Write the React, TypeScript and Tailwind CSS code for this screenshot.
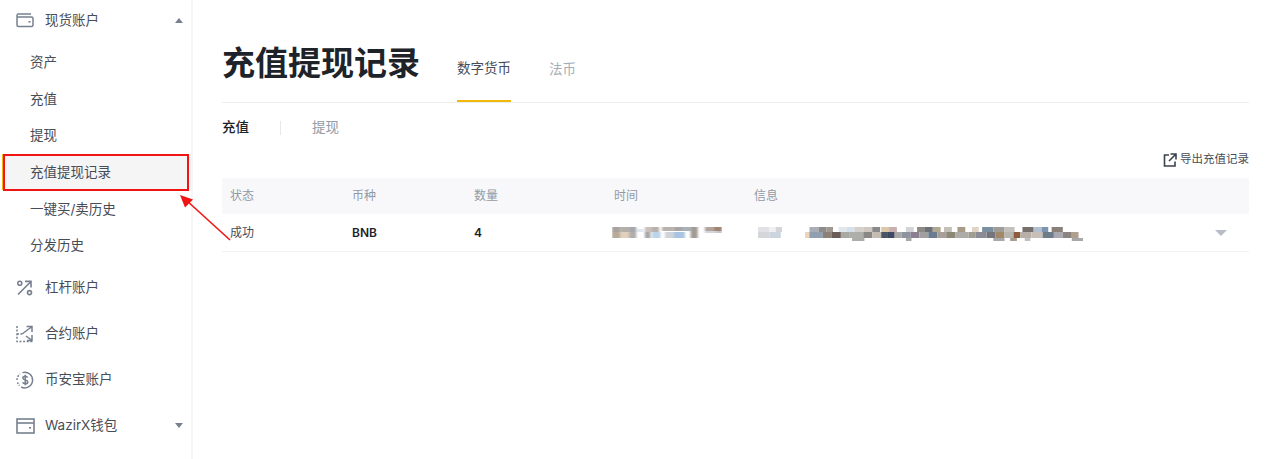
import type { ReactNode } from "react";

const font = { fontFamily: '"Inter", "Noto Sans CJK SC", sans-serif' };

// 打码区域的马赛克色块 [x, y, w, h, 色]
const mosaicTime: [number, number, number, number, string][] = [
  [0, 0, 6, 5, "#a9a29c"], [6, 0, 6, 5, "#b4aea8"], [12, 0, 5, 5, "#a4a7ab"], [17, 2, 5, 3, "#dfe8f0"],
  [0, 5, 6, 6, "#b8a998"], [6, 5, 6, 6, "#e0d0bc"], [12, 5, 5, 6, "#b0aeac"], [23, 0, 5, 5, "#c8c0bc"],
  [28, 0, 5, 5, "#b8b0ac"], [23, 5, 4, 6, "#a8a8a8"], [28, 5, 6, 6, "#bcd4ea"], [35, 0, 8, 4, "#b8b2ae"],
  [43, 0, 6, 4, "#a8a4a4"], [37, 5, 6, 6, "#d0d4d8"], [43, 5, 8, 6, "#a8c4e0"], [49, 0, 6, 4, "#a8b0b8"],
  [55, 0, 5, 11, "#a09c94"], [65, 0, 6, 4, "#b0a49c"], [71, 0, 6, 4, "#a08470"], [65, 4, 8, 2, "#d0d4d8"],
  [73, 4, 4, 2, "#c0c4c8"],
];

const mosaicInfo: [number, number, number, number, string][] = [
  [0, 0, 9, 5, "#e2e2e6"], [9, 0, 5, 5, "#f0f0f2"], [14, 0, 5, 5, "#d4d4d8"],
  [0, 5, 9, 6, "#d4d6da"], [9, 5, 9, 6, "#ccd4e0"],
];

const mosaicHash: [number, number, number, number, string][] = [
  [4, 0, 8, 5, "#a8aeb8"], [12, 0, 7, 5, "#8e8c8a"], [19, 0, 6, 5, "#a09890"], [30, 0, 7, 5, "#e0e8ee"],
  [37, 0, 7, 5, "#d4e0ea"], [44, 0, 8, 5, "#d4d0cc"], [52, 0, 8, 5, "#d0c8c0"], [60, 0, 7, 5, "#8a8a8a"],
  [68, 0, 7, 5, "#dcc8a8"], [75, 0, 7, 5, "#c8b0b0"], [90, 0, 7, 5, "#d4d4d8"], [100, 0, 7, 5, "#8c8884"],
  [107, 0, 7, 5, "#6e7078"], [114, 0, 7, 5, "#b0a890"], [124, 0, 7, 5, "#c4c0b8"], [136, 0, 7, 5, "#a89c88"],
  [149, 0, 6, 5, "#e0d4c4"], [158, 0, 10, 5, "#7a90a0"], [168, 0, 10, 5, "#a09c98"], [178, 0, 9, 5, "#c4c0bc"],
  [194, 0, 10, 5, "#76706c"], [204, 0, 7, 5, "#b4c0d0"], [211, 0, 6, 5, "#7c94b0"], [220, 0, 10, 5, "#8a8078"],
  [0, 5, 5, 6, "#ecd4b8"], [4, 5, 12, 6, "#90a0b0"], [16, 5, 8, 6, "#8c8078"], [24, 5, 8, 6, "#6c5c58"],
  [32, 5, 8, 6, "#a8a8a4"], [40, 5, 12, 6, "#aeaeaa"], [52, 5, 8, 6, "#8a8884"], [60, 5, 8, 6, "#c4bcb0"],
  [68, 5, 6, 6, "#4c5468"], [74, 5, 6, 6, "#404860"], [80, 5, 6, 6, "#a8a8a8"], [86, 5, 8, 6, "#8c94a0"],
  [94, 5, 8, 6, "#8c8090"], [102, 5, 8, 6, "#a0a0a0"], [110, 5, 8, 6, "#6c7c90"], [118, 5, 8, 6, "#a8a098"],
  [126, 5, 8, 6, "#8c8878"], [134, 5, 12, 6, "#acaca8"], [146, 5, 6, 6, "#a09c90"], [152, 5, 10, 6, "#8c8c94"],
  [162, 5, 8, 6, "#74747c"], [170, 5, 8, 6, "#a08868"], [178, 5, 8, 6, "#b8b4ae"], [186, 5, 6, 6, "#8c5c3c"],
  [192, 5, 10, 6, "#b8b0a8"], [202, 5, 10, 6, "#c8c0b8"], [212, 5, 10, 6, "#6c7c88"], [222, 5, 8, 6, "#a8a8b0"],
  [230, 5, 8, 6, "#8c8480"], [238, 5, 6, 6, "#b0a090"], [42, 11, 11, 3, "#acaca8"], [90, 11, 5, 3, "#a8a8a8"],
  [168, 11, 10, 3, "#a8a8ac"], [183, 11, 6, 3, "#a89c90"], [196, 11, 5, 3, "#c0c0c0"], [238, 11, 10, 3, "#a8a8a8"],
];

function Mosaic({ cells, w, h, vw }: { cells: typeof mosaicTime; w: number; h: number; vw: number }) {
  return (
    <svg width={w} height={h} viewBox={`0 0 ${vw} ${h}`} preserveAspectRatio="none" className="block">
      <filter id="m">
        <feGaussianBlur stdDeviation="0.6" />
      </filter>
      <g filter="url(#m)">
        {cells.map(([x, y, cw, ch, c], i) => (
          <rect key={i} x={x} y={y} width={cw} height={ch} fill={c} />
        ))}
      </g>
    </svg>
  );
}

const stroke = "#76808f";

const SpotIcon = (
  <svg width="18" height="16" viewBox="0 0 18 16" fill="none" stroke={stroke} strokeWidth="1.5">
    <path d="M1 5.5V3.5C1 2.5 1.8 2 2.5 2H15" />
    <rect x="1" y="5" width="16" height="9.5" rx="1.5" />
    <rect x="12.5" y="9" width="2" height="1.6" fill={stroke} stroke="none" />
  </svg>
);

const MarginIcon = (
  <svg width="18" height="16" viewBox="0 0 18 16" fill="none" stroke={stroke} strokeWidth="1.6">
    <circle cx="3.8" cy="3.2" r="2" />
    <circle cx="13.5" cy="12.6" r="2" />
    <path d="M2 14.5L14.5 2M9 1.4H15V7.4" />
  </svg>
);

const FuturesIcon = (
  <svg width="18" height="18" viewBox="0 0 18 18" fill="none" stroke={stroke} strokeWidth="1.5">
    <path d="M1 1V16.5H17" strokeDasharray="2 1.6" />
    <path d="M1 9H6" strokeDasharray="2 1.4" />
    <path d="M6 9L15.5 2M10.5 1.5H16V7M10 11L15.5 15M16 10V15.5H11" />
  </svg>
);

const EarnIcon = (
  <svg width="18" height="18" viewBox="0 0 18 18" fill="none" stroke={stroke} strokeWidth="1.5">
    <path d="M6.5 1.6A7.8 7.8 0 1 1 5.2 16" />
    <path d="M1 9A8 8 0 0 1 4 3" strokeDasharray="1.8 1.4" />
    <path d="M1.4 11.5L3.4 14.6" strokeDasharray="1.6 1.2" />
    <path d="M11.6 6.6C11.2 5.6 10.2 5.2 9.2 5.2C8 5.2 6.8 5.8 6.8 7C6.8 9.6 11.8 8.2 11.8 10.9C11.8 12.2 10.6 12.8 9.3 12.8C8.1 12.8 7 12.2 6.6 11.2M9.2 3.8V14.2" />
  </svg>
);

const WalletIcon = (
  <svg width="19" height="16" viewBox="0 0 19 16" fill="none" stroke={stroke} strokeWidth="1.6">
    <rect x="1" y="1" width="17" height="14" />
    <path d="M1 5H18" />
    <rect x="13" y="9" width="2" height="1.6" fill={stroke} stroke="none" />
  </svg>
);

function MainItem({ icon, label, caret }: { icon: ReactNode; label: string; caret?: "up" | "down" }) {
  return (
    <div className="flex h-[46px] items-center pl-[16px] pr-[7px] text-[13.5px] text-[#474d57]">
      <span className="flex w-[29px] shrink-0 items-center">{icon}</span>
      <span className="flex-1">{label}</span>
      {caret === "up" && <span className="mr-[1px] h-0 w-0 border-x-[4px] border-b-[5px] border-x-transparent border-b-[#76808f]" />}
      {caret === "down" && <span className="mr-[1px] h-0 w-0 border-x-[4px] border-t-[5px] border-x-transparent border-t-[#76808f]" />}
    </div>
  );
}

function SubItem({ label, active }: { label: string; active?: boolean }) {
  return (
    <div
      className={
        active
          ? "ml-[2px] flex h-[36.6px] items-center border-l-[1px] border-[#f0b90b] bg-[#f5f5f5] pl-[27px] text-[13.5px] text-[#474d57]"
          : "flex h-[36.6px] items-center pl-[30px] text-[13.5px] text-[#474d57]"
      }
    >
      {label}
    </div>
  );
}

export default function App() {
  return (
    <div className="relative flex h-[459px] w-[1280px] overflow-hidden bg-white" style={font}>
      {/* サイドバー */}
      <aside className="h-full w-[193px] shrink-0 border-r-2 border-[#f5f5f5]">
        <div className="mb-[1px] mt-[-3px]">
          <MainItem icon={SpotIcon} label="现货账户" caret="up" />
        </div>
        <div className="mb-[1px]">
          <SubItem label="资产" />
          <SubItem label="充值" />
          <SubItem label="提现" />
          <SubItem label="充值提现记录" active />
          <SubItem label="一键买/卖历史" />
          <SubItem label="分发历史" />
        </div>
        <MainItem icon={MarginIcon} label="杠杆账户" />
        <MainItem icon={FuturesIcon} label="合约账户" />
        <MainItem icon={EarnIcon} label="币安宝账户" />
        <MainItem icon={WalletIcon} label="WazirX钱包" caret="down" />
      </aside>

      {/* メイン */}
      <main className="ml-[29px] w-[1027px]">
        <div className="flex h-[103px] items-end border-b border-[#eeeeee] pb-0">
          <h1 className="mb-[17px] w-[235px] text-[33px] leading-[44px] font-bold text-[#1e2329]">充值提现记录</h1>
          <div className="flex h-[66px] w-[54px] items-center border-b-2 border-[#f0b90b] pt-[1px] text-[13.5px] whitespace-nowrap text-[#474d57]">
            数字货币
          </div>
          <div className="ml-[38px] flex h-[66px] items-center pt-[1px] text-[13.5px] text-[#a6adb8]">法币</div>
        </div>

        <div className="flex h-[47px] items-center pt-[2px] text-[13.5px]">
          <span className="font-medium text-[#1e2329]">充值</span>
          <span className="ml-[31px] h-[14px] w-px bg-[#e6e8ea]" />
          <span className="ml-[31px] text-[#929aa5]">提现</span>
        </div>

        <div className="flex h-[28px] items-center justify-end gap-[3px] pb-[8px] text-[11.5px] text-[#474d57]">
          <svg width="14" height="14" viewBox="0 0 14 14" fill="none" stroke="#3c424c" strokeWidth="1.6">
            <path d="M6 2H1.5V13H12V8.5M7.5 1H13V6.5M13 1L6 8" />
          </svg>
          <span>导出充值记录</span>
        </div>

        <div className="flex h-[36px] items-center bg-[#f8f8fa] text-[12px] text-[#929aa5]">
          <span className="ml-[8px] w-[122px]">状态</span>
          <span className="w-[122px]">币种</span>
          <span className="w-[140px]">数量</span>
          <span className="w-[140px]">时间</span>
          <span>信息</span>
        </div>

        <div className="flex h-[38px] items-center border-b border-[#f2f2f2] text-[12px] text-[#474d57]">
          <span className="ml-[8px] w-[122px]">成功</span>
          <span className="w-[122px] font-semibold text-[#1e2329]">BNB</span>
          <span className="w-[138px] font-semibold text-[#1e2329]">4</span>
          <span className="w-[146px]">
            <Mosaic cells={mosaicTime} w={110} h={12} vw={77} />
          </span>
          <span className="w-[47px]">
            <Mosaic cells={mosaicInfo} w={24} h={12} vw={19} />
          </span>
          <span className="mt-[3px] flex-1">
            <Mosaic cells={mosaicHash} w={278} h={15} vw={248} />
          </span>
          <span className="mr-[22px] h-0 w-0 border-x-[6px] border-t-[6px] border-x-transparent border-t-[#b7bdc6]" />
        </div>
      </main>

      {/* 赤枠と矢印の注釈 */}
      <div className="absolute left-[3px] top-[154px] h-[37px] w-[186px] border-2 border-[#f01414]" />
      <svg className="absolute left-[170px] top-[185px]" width="70" height="60" viewBox="0 0 70 60" fill="none">
        <path d="M60 55L16 15" stroke="#f01414" strokeWidth="1.6" />
        <path d="M10 10L23 14.5L15 22.5Z" fill="#f01414" />
      </svg>
    </div>
  );
}
